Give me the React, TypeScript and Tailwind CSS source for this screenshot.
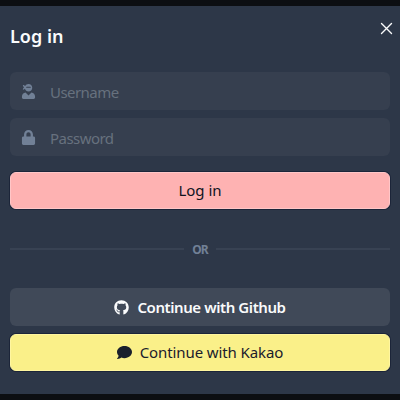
import type { ReactNode } from "react";
import { FaComment, FaGithub, FaLock, FaUserNinja } from "react-icons/fa";

function Field({ icon, type, placeholder }: { icon: ReactNode; type: string; placeholder: string }) {
  return (
    <div className="flex h-[38px] items-center rounded-md bg-[#363f4f] pl-[11px]">
      <span className="flex w-[29px] text-[15px] text-[#718096]">{icon}</span>
      <input
        type={type}
        placeholder={placeholder}
        className="h-full min-w-0 flex-1 bg-transparent pt-px text-[15px] tracking-[-0.55px] text-white outline-none placeholder:text-[#67717e]"
      />
    </div>
  );
}

function Divider() {
  return (
    <div className="mt-8 flex h-4 items-center gap-2">
      <span className="h-0.5 flex-1 bg-[#384253]" />
      <span className="pt-px text-[12px] font-bold leading-4 tracking-[-0.8px] text-[#718096]">OR</span>
      <span className="h-0.5 flex-1 bg-[#384253]" />
    </div>
  );
}

export default function App() {
  return (
    <div className="h-[400px] w-[400px] overflow-hidden bg-[#0c0e12] py-1.5 font-['Noto_Sans',sans-serif]">
      <div className="h-[388px] bg-[#2d3748] px-2.5">
        {/* Header */}
        <div className="flex h-[66px] items-start justify-between">
          <h1 className="pt-[18px] text-[18px] font-semibold leading-6 text-[#fafbfc]">Log in</h1>
          <button aria-label="Close" className="-mr-[3px] mt-4 flex text-[#fafbfc]">
            <svg width="13" height="13" viewBox="0 0 13 13" fill="none">
              <path d="M1.5 1.5l10 10M11.5 1.5l-10 10" stroke="currentColor" strokeWidth="1.4" strokeLinecap="round" />
            </svg>
          </button>
        </div>

        <div className="flex flex-col gap-2">
          <Field icon={<FaUserNinja />} type="text" placeholder="Username" />
          <Field icon={<FaLock />} type="password" placeholder="Password" />
        </div>

        <button className="mt-4 flex h-[37px] w-full items-center justify-center rounded-md border border-[#ffc6c7] bg-[#feb2b2] text-[15px] text-[#10141f] ring-1 ring-[#1c2539]">
          Log in
        </button>

        <Divider />

        {/* Social login */}
        <div className="mt-[31px] flex flex-col gap-2">
          <button className="flex h-[38px] w-full items-center justify-center gap-2 rounded-md bg-[#404958] text-[15px] font-semibold tracking-[-0.42px] text-[#fafbfc]">
            <FaGithub />
            Continue with Github
          </button>
          <button className="flex h-[37px] w-full items-center justify-center gap-2 rounded-md border border-[#fff6a0] bg-[#faf089] text-[15px] tracking-[-0.1px] text-[#1a202c] ring-1 ring-[#1c2539]">
            <FaComment />
            Continue with Kakao
          </button>
        </div>
      </div>
    </div>
  );
}
